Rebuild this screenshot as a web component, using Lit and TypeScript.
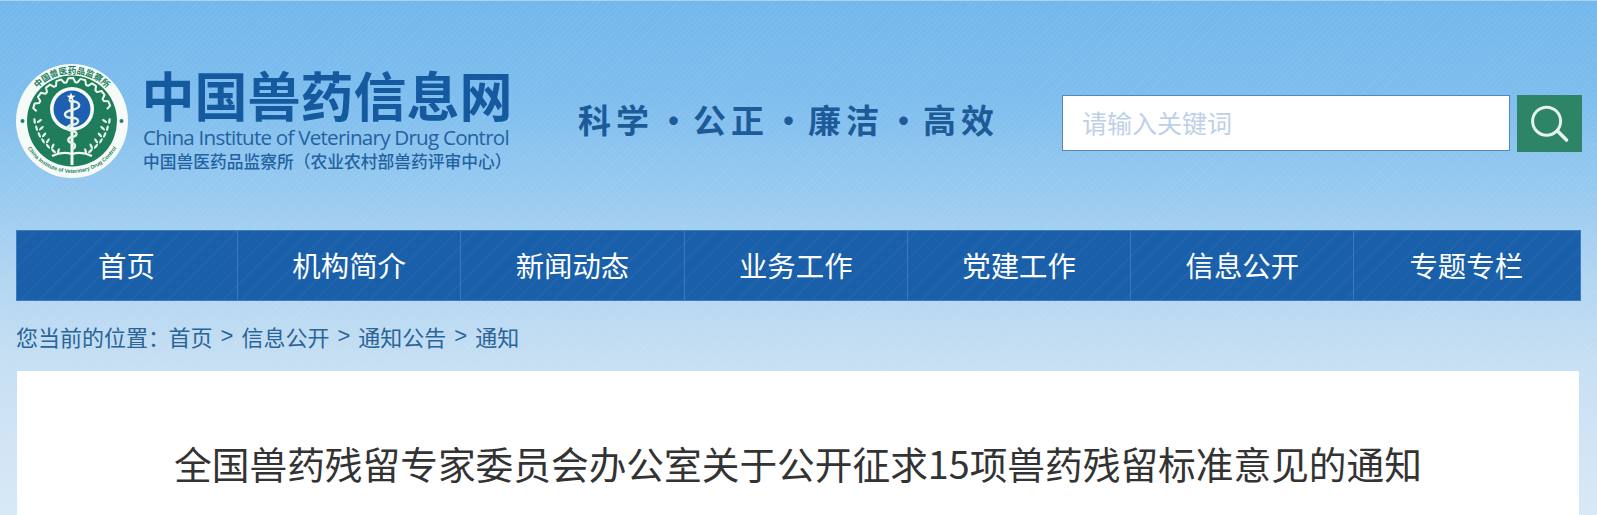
import { LitElement, html, css, svg } from "lit";
import { customElement } from "lit/decorators.js";

const NAV = ["首页", "机构简介", "新闻动态", "业务工作", "党建工作", "信息公开", "专题专栏"];
const CRUMBS = ["首页", "信息公开", "通知公告", "通知"];
const SLOGAN = ["科学", "公正", "廉洁", "高效"];

function wheat(side: number) {
  const leaves = [];
  const x0 = 21, y0 = 57, x1 = 40, y1 = 87;
  for (let i = 0; i < 6; i++) {
    const t = i / 5;
    const bx = x0 + (x1 - x0) * t - 3 * Math.sin(t * Math.PI) ;
    const by = y0 + (y1 - y0) * t + 2 * Math.sin(t * Math.PI);
    const x = side < 0 ? bx : 112 - bx;
    const tilt = (25 - t * 40) * -side;
    for (const s of [-1, 1]) {
      const ox = x + s * 2.4, oy = by;
      leaves.push(svg`<ellipse cx=${ox.toFixed(1)} cy=${oy.toFixed(1)} rx="1.2" ry="3"
        fill="#eaf4ea" transform="rotate(${tilt + s * 32} ${ox.toFixed(1)} ${oy.toFixed(1)})"/>`);
    }
  }
  return leaves;
}

function gearPath() {
  const cx = 56, cy = 54, teeth = 9, r1 = 40, r2 = 36, start = 1.06, span = 0.88;
  let d = "";
  for (let i = 0; i < teeth; i++) {
    const step = span / teeth;
    const pts: [number, number][] = [
      [start + step * i, r2],
      [start + step * (i + 0.2), r1],
      [start + step * (i + 0.6), r1],
      [start + step * (i + 0.8), r2],
    ];
    for (const [a, r] of pts) {
      const x = cx + r * Math.cos(Math.PI * a), y = cy + r * Math.sin(Math.PI * a);
      d += `${d ? "L" : "M"}${x.toFixed(1)} ${y.toFixed(1)} `;
    }
  }
  return d;
}

@customElement("app-root")
export class AppRoot extends LitElement {
  static styles = css`
    :host {
      display: block;
      font-family: "Noto Sans CJK SC", "Liberation Sans", sans-serif;
    }
    .page {
      height: 515px;
      overflow: hidden;
      display: flex;
      flex-direction: column;
      border-top: 1px solid #a9d4f3;
      box-sizing: border-box;
      background-image:
        repeating-linear-gradient(135deg, rgba(255,255,255,0.05) 0 1px, rgba(255,255,255,0) 1px 4px),
        linear-gradient(180deg, #72b8ec 0, #7fbeee 100px, #98caf0 190px, #b3d6f1 280px, #c8e0f3 370px, #d8e9f6 515px);
    }
    .top {
      height: 229px;
      flex: none;
      display: flex;
      align-items: flex-start;
      box-sizing: border-box;
      padding: 63px 15px 0 16px;
    }
    .logo { flex: none; width: 112px; height: 114px; display: block; }
    .brand {
      flex: none;
      width: 375px;
      margin-left: 15px;
      display: flex;
      flex-direction: column;
    }
    .brand-cn {
      font-size: 53px;
      line-height: 60px;
      font-weight: 700;
      white-space: nowrap;
      color: #15599f;
      margin-left: -1.5px;
    }
    .brand-en {
      font-family: "Open Sans", "Liberation Sans", sans-serif;
      font-size: 20.6px;
      line-height: 24px;
      letter-spacing: -0.77px;
      white-space: nowrap;
      color: #22629f;
      margin-top: 1px;
    }
    .brand-sub {
      font-size: 16.75px;
      line-height: 20px;
      margin-top: 2px;
      white-space: nowrap;
      font-weight: 500;
      color: #22629f;
    }
    .slogan {
      flex: none;
      display: flex;
      align-items: center;
      margin: 32px 0 0 60px;
      width: 484px;
      color: #1d5a98;
      font-size: 33px;
      line-height: 46px;
      font-weight: 700;
    }
    .slogan .pair { letter-spacing: 5px; white-space: nowrap; width: 76px; }
    .slogan .dot { width: 39px; text-align: center; }
    .search { flex: none; display: flex; align-items: flex-start; gap: 7px; margin-top: 31px; }
    .search input {
      width: 448px;
      height: 56px;
      box-sizing: border-box;
      border: 1.5px solid #5287c0;
      background: #fff;
      padding: 0 19px 2px;
      outline: none;
      font-family: inherit;
      font-size: 25px;
      color: #333;
      border-radius: 0;
    }
    .search input::placeholder { color: #bdd0e8; opacity: 1; }
    .search button {
      width: 65px;
      height: 57px;
      margin: 0;
      padding: 0;
      border: 0;
      background: #2d8467;
      display: block;
    }
    .search svg { width: 65px; height: 57px; display: block; }
    .nav {
      flex: none;
      margin: 0 16px 0 16px;
      height: 71px;
      display: grid;
      grid-template-columns: 221px repeat(5, 223.3px) 1fr;
      background-color: #1a5fa9;
      background-image: repeating-linear-gradient(135deg, rgba(255,255,255,0.03) 0 2px, rgba(255,255,255,0) 2px 13px);
      box-shadow: inset 0 0 0 1px #3d7bbd;
    }
    .nav a {
      color: #fff;
      font-size: 28.4px;
      line-height: 69px;
      text-align: center;
      white-space: nowrap;
      border-left: 1px solid #3d78b8;
    }
    .nav a:first-child { border-left: 0; }
    .nav a:last-child { padding-right: 3px; }
    .crumb {
      flex: none;
      height: 70px;
      box-sizing: border-box;
      padding: 0 0 0 16px;
      display: flex;
      align-items: center;
      font-size: 22px;
      color: #2a6499;
      white-space: nowrap;
    }
    .crumb .label { margin-right: -1.5px; }
    .crumb .sep { margin: 0 8px; font-family: "Liberation Sans", sans-serif; }
    .card {
      flex: 1;
      margin: 0 18px 0 17px;
      background: #fff;
      display: flex;
      justify-content: center;
      padding-top: 62px;
    }
    .card h1 {
      margin: 0;
      font-size: 37.7px;
      line-height: 60px;
      font-weight: 400;
      color: #333;
      white-space: nowrap;
    }
  `;

  private logo() {
    return html`<svg class="logo" viewBox="0 0 112 114" role="img" aria-label="中国兽医药品监察所">
      <defs>
        <path id="arcTop" d="M8.5 57 A47.5 47.5 0 0 1 103.5 57" />
        <path id="arcBottom" d="M4 57 A52 52 0 0 0 108 57" />
      </defs>
      <ellipse cx="56" cy="57" rx="56" ry="57" fill="#f6fbf8" />
      <ellipse cx="56" cy="57" rx="45" ry="45.5" fill="#1f7d5c" />
      <text font-size="8.6" font-weight="700" fill="#238060" font-family="Noto Sans CJK SC, sans-serif">
        <textPath href="#arcTop" startOffset="50%" text-anchor="middle">中国兽医药品监察所</textPath>
      </text>
      <text font-size="5.4" font-weight="700" fill="#238060" font-family="Liberation Sans, sans-serif">
        <textPath href="#arcBottom" startOffset="50%" text-anchor="middle">China Institute of Veterinary Drug Control</textPath>
      </text>
      <circle cx="6.5" cy="57" r="2" fill="#238060" />
      <circle cx="105.5" cy="57" r="2" fill="#238060" />
      <path d=${gearPath()} fill="none" stroke="#f3f8ee" stroke-width="2" stroke-linejoin="round" />
      <circle cx="56" cy="45" r="22" fill="#f6fbf8" />
      <circle cx="56" cy="45" r="18.5" fill="#1d5fb0" />
      <polygon points="55,28.5 56.2,31.6 59.5,31.7 56.9,33.7 57.8,36.9 55,35 52.2,36.9 53.1,33.7 50.5,31.7 53.8,31.6" fill="#f6fbf8" />
      <path d="M56 36 V101" stroke="#f6fbf8" stroke-width="3" />
      <path d="M53 37 C66 37 66 44 56 46 C46 48 47 54 57 54 C64 54 64 60 56 61 C50 62 50 66 56 67 C62 68 62 72 56 73 C51 74 51 78 56 79 C60 80 60 84 56 85"
        fill="none" stroke="#e2efe9" stroke-width="2.4" />
      ${wheat(-1)} ${wheat(1)}
      <path d="M36 92 C44 88 50 88 56 90 C62 88 68 88 76 92" fill="none" stroke="#f3f8ee" stroke-width="2.2" />
    </svg>`;
  }

  render() {
    return html`<div class="page">
      <header class="top">
        ${this.logo()}
        <div class="brand">
          <div class="brand-cn">中国兽药信息网</div>
          <div class="brand-en">China Institute of Veterinary Drug Control</div>
          <div class="brand-sub">中国兽医药品监察所（农业农村部兽药评审中心）</div>
        </div>
        <div class="slogan">
          ${SLOGAN.map((s, i) => html`${i > 0 ? html`<span class="dot">·</span>` : ""}<span class="pair">${s}</span>`)}
        </div>
        <div class="search">
          <input type="text" placeholder="请输入关键词" />
          <button aria-label="搜索">
            <svg viewBox="0 0 65 57" fill="none" stroke="#e6f3ec" stroke-width="3" stroke-linecap="round">
              <circle cx="29.6" cy="26.2" r="14" />
              <path d="M40.5 36 L49.5 45" stroke-width="3.6" />
            </svg>
          </button>
        </div>
      </header>
      <nav class="nav">${NAV.map((n) => html`<a>${n}</a>`)}</nav>
      <div class="crumb">
        <span class="label">您当前的位置：</span>
        ${CRUMBS.map((c, i) => html`${i > 0 ? html`<span class="sep">&gt;</span>` : ""}<span>${c}</span>`)}
      </div>
      <main class="card">
        <h1>全国兽药残留专家委员会办公室关于公开征求15项兽药残留标准意见的通知</h1>
      </main>
    </div>`;
  }
}
